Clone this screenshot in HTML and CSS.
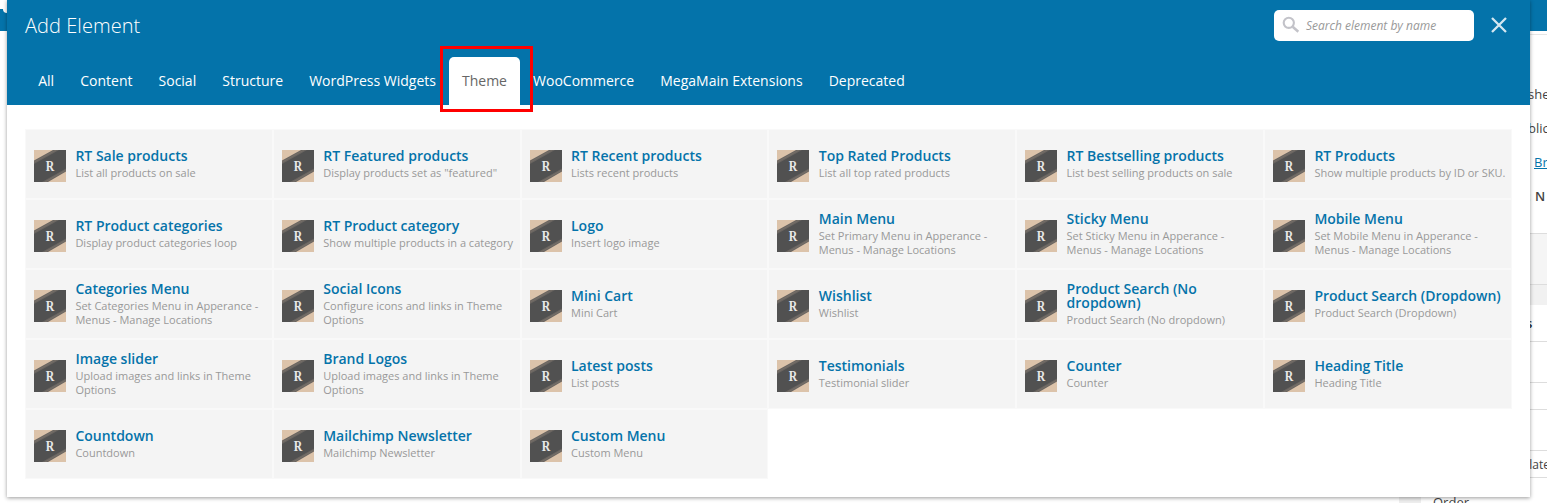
FILE: index.html
```
<!DOCTYPE html>
<html lang="en">
<head>
<meta charset="utf-8">
<title>Add Element</title>
<link rel="stylesheet" href="styles.css">
</head>
<body>
<svg class="defs" width="0" height="0">
  <symbol id="rt" viewBox="0 0 32 32">
    <rect width="32" height="32" fill="#dcc3aa"/>
    <path d="M0 10.5 19 0H32V21.5L14 32H0Z" fill="#6a6561"/>
    <path d="M0 14 25 0H32V18.5L8 32H0Z" fill="#515151"/>
    <path d="M0 12.2 22 0M11 32 32 20" stroke="#82786f" stroke-width=".5"/>
    <text transform="translate(16 20.8) scale(.84 1.1)" text-anchor="middle" class="rt-letter">R</text>
  </symbol>
</svg>
<div class="page">
  <div class="adminbar"><i class="pin"></i></div>
  <aside class="sidebar">
    <div class="publish">
      <p>she</p><p>blic</p><p class="browse"><a>Browse</a></p><p class="revision">: N</p>
    </div>
    <div class="actions"></div>
    <div class="space"></div>
    <div class="box heading">s</div>
    <div class="box tall"></div>
    <div class="box short"></div>
    <div class="box tall"></div>
    <div class="box template">plate</div>
    <div class="order">Order</div>
  </aside>
</div>
<main class="modal">
  <header class="header">
    <div class="titlebar">
      <h1>Add Element</h1>
      <div class="search">
        <svg width="18" height="18" viewBox="0 0 18 18"><circle cx="6.8" cy="6.8" r="5.1" fill="none" stroke="#c3c3c9" stroke-width="2.1"/><path d="m10.7 10.7 5.6 5" stroke="#c3c3c9" stroke-width="2.5"/></svg>
        <span>Search element by name</span>
      </div>
      <svg class="close" width="16" height="16" viewBox="0 0 16 16"><path d="M1 1 15 15M15 1 1 15" stroke="#d4e7f1" stroke-width="2.3"/></svg>
    </div>
    <nav class="tabs">
      <a>All</a><a>Content</a><a>Social</a><a>Structure</a><a>WordPress Widgets</a><a class="active">Theme</a><a>WooCommerce</a><a>MegaMain Extensions</a><a>Deprecated</a>
    </nav>
  </header>
  <ul class="grid">
    <li><svg><use href="#rt"/></svg><div><b>RT Sale products</b><small>List all products on sale</small></div></li>
    <li><svg><use href="#rt"/></svg><div><b>RT Featured products</b><small>Display products set as "featured"</small></div></li>
    <li><svg><use href="#rt"/></svg><div><b>RT Recent products</b><small>Lists recent products</small></div></li>
    <li><svg><use href="#rt"/></svg><div><b>Top Rated Products</b><small>List all top rated products</small></div></li>
    <li><svg><use href="#rt"/></svg><div><b>RT Bestselling products</b><small>List best selling products on sale</small></div></li>
    <li><svg><use href="#rt"/></svg><div><b>RT Products</b><small>Show multiple products by ID or SKU.</small></div></li>
    <li><svg><use href="#rt"/></svg><div><b>RT Product categories</b><small>Display product categories loop</small></div></li>
    <li><svg><use href="#rt"/></svg><div><b>RT Product category</b><small>Show multiple products in a category</small></div></li>
    <li><svg><use href="#rt"/></svg><div><b>Logo</b><small>Insert logo image</small></div></li>
    <li><svg><use href="#rt"/></svg><div><b>Main Menu</b><small>Set Primary Menu in Apperance -<br>Menus - Manage Locations</small></div></li>
    <li><svg><use href="#rt"/></svg><div><b>Sticky Menu</b><small>Set Sticky Menu in Apperance -<br>Menus - Manage Locations</small></div></li>
    <li><svg><use href="#rt"/></svg><div><b>Mobile Menu</b><small>Set Mobile Menu in Apperance -<br>Menus - Manage Locations</small></div></li>
    <li><svg><use href="#rt"/></svg><div><b>Categories Menu</b><small>Set Categories Menu in Apperance -<br>Menus - Manage Locations</small></div></li>
    <li><svg><use href="#rt"/></svg><div><b>Social Icons</b><small>Configure icons and links in Theme<br>Options</small></div></li>
    <li><svg><use href="#rt"/></svg><div><b>Mini Cart</b><small>Mini Cart</small></div></li>
    <li><svg><use href="#rt"/></svg><div><b>Wishlist</b><small>Wishlist</small></div></li>
    <li><svg><use href="#rt"/></svg><div><b>Product Search (No<br>dropdown)</b><small>Product Search (No dropdown)</small></div></li>
    <li><svg><use href="#rt"/></svg><div><b>Product Search (Dropdown)</b><small>Product Search (Dropdown)</small></div></li>
    <li><svg><use href="#rt"/></svg><div><b>Image slider</b><small>Upload images and links in Theme<br>Options</small></div></li>
    <li><svg><use href="#rt"/></svg><div><b>Brand Logos</b><small>Upload images and links in Theme<br>Options</small></div></li>
    <li><svg><use href="#rt"/></svg><div><b>Latest posts</b><small>List posts</small></div></li>
    <li><svg><use href="#rt"/></svg><div><b>Testimonials</b><small>Testimonial slider</small></div></li>
    <li><svg><use href="#rt"/></svg><div><b>Counter</b><small>Counter</small></div></li>
    <li><svg><use href="#rt"/></svg><div><b>Heading Title</b><small>Heading Title</small></div></li>
    <li><svg><use href="#rt"/></svg><div><b>Countdown</b><small>Countdown</small></div></li>
    <li><svg><use href="#rt"/></svg><div><b>Mailchimp Newsletter</b><small>Mailchimp Newsletter</small></div></li>
    <li><svg><use href="#rt"/></svg><div><b>Custom Menu</b><small>Custom Menu</small></div></li>
  </ul>
</main>
<div class="highlight"></div>
</body>
</html>
```
FILE: styles.css
```
* { box-sizing: border-box; }
body { margin: 0; height: 503px; overflow: hidden; position: relative; background: #fff; font-family: "Open Sans", sans-serif; }
h1, p, ul { margin: 0; padding: 0; }
.defs { position: absolute; }
.rt-letter { font: bold 14px "Liberation Serif", serif; fill: #e8e8e8; }

.page { height: 503px; overflow: hidden; }
.adminbar { height: 31px; background: #0473aa; }
.adminbar::before { content: ""; display: block; width: 7px; height: 9px; background: #fff; }
.pin { display: block; width: 4px; height: 4px; margin-left: 3px; background: #fff; border-radius: 0 0 0 4px; }
.sidebar { width: 148px; margin-left: auto; font-size: 13px; color: #444; border-left: 22px solid #eee; }
.publish { height: 200px; margin-top: 3px; padding: 42px 0 0 107px; border-top: 1px solid #e5e5e5; border-bottom: 1px solid #ddd; }
.publish p { height: 34px; line-height: 34px; white-space: nowrap; }
.publish .browse { padding-left: 6px; }
.publish .revision { font-weight: 600; margin-left: -1px; word-spacing: 1px; }
.publish a { color: #0473aa; text-decoration: underline; }
.actions { height: 51px; background: #f5f5f5; border-bottom: 1px solid #ddd; }
.space { height: 20px; background: #f1f1f1; }
.box { border-bottom: 1px solid #ddd; }
.heading { height: 37px; padding-left: 105px; line-height: 37px; font-weight: 600; color: #23282d; }
.tall { height: 41px; }
.short { height: 27px; }
.template { height: 27px; padding-left: 101px; font-size: 12px; line-height: 28px; }
.order { padding: 14px 0 0 12px; font-size: 13px; line-height: 20px; }

.modal { position: absolute; left: 7px; top: 0; width: 1523px; height: 497px; background: #fff; box-shadow: 0 1px 4px rgba(0,0,0,.4); }
.header { height: 105px; background: #0473aa; color: #fff; }
.titlebar { height: 57px; padding: 10px 23px 0 18px; display: flex; }
h1 { flex: 1; font-size: 20px; font-weight: 300; line-height: 31px; letter-spacing: .05px; }
.search { width: 200px; height: 31px; padding: 0 8px; display: flex; align-items: center; gap: 6px; background: #fff; border-radius: 5px; }
.search svg { margin-top: -2px; }
.search span { color: #999; font-size: 12px; font-style: italic; white-space: nowrap; }
.close { margin: 7px 0 0 17px; }
.tabs { display: flex; padding-left: 18.2px; }
.tabs a { height: 48px; padding: 0 13.04px; line-height: 48px; font-size: 14px; white-space: nowrap; }
.tabs .active { background: #fff; color: #666; border-radius: 5px 5px 0 0; }
.grid { display: grid; grid-template-columns: repeat(6, 247.8px); grid-auto-rows: 70px; padding: 24px 0 0 18px; list-style: none; }
.grid li { display: flex; align-items: center; padding: 1px 0 0 8px; background: #f4f4f4; border: 1px solid #f9f9f9; }
.grid svg { flex: none; width: 32px; height: 32px; margin: 3px 9.4px 0 0; }
.grid div { flex: 1; white-space: nowrap; }
.grid b { display: block; font-size: 14px; line-height: 14px; font-weight: 600; color: #0473aa; }
.grid small { display: block; margin-top: 3px; font-size: 11px; line-height: 14px; color: #999; }
.highlight { position: absolute; left: 440px; top: 46px; width: 93px; height: 66px; border: 3px solid #f00; }
```
